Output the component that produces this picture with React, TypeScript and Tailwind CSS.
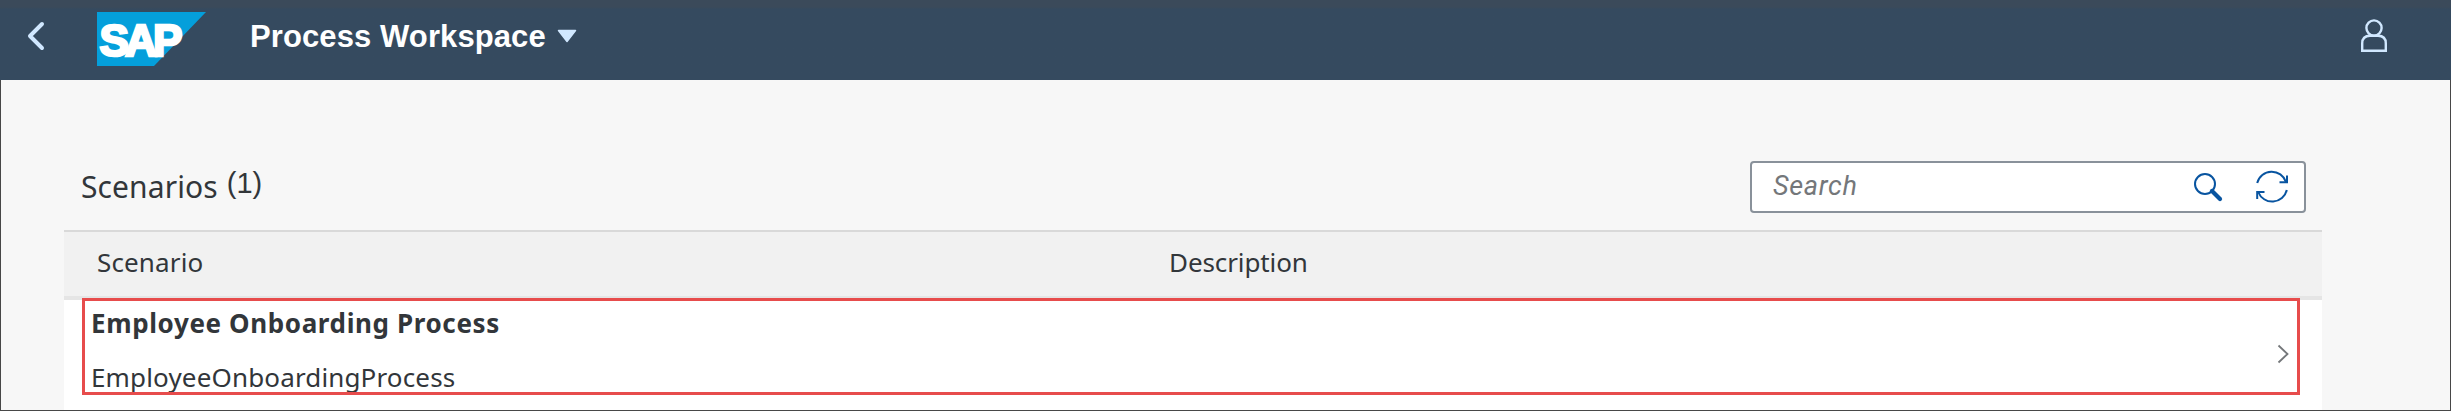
import React from "react";

function ShellBar() {
  return (
    <header className="flex h-20 shrink-0 items-start bg-[#354a5f] bg-linear-to-b from-[#3b4a5a] from-[7px] to-[#354a5f] to-[9px] pr-16">
      <button aria-label="Back" className="ml-[26px] mt-5 h-8 w-5">
        <svg width="20" height="32" viewBox="0 0 20 32" fill="none" stroke="#d1e8ff" strokeWidth="4" strokeLinecap="round" strokeLinejoin="round">
          <path d="M16 4L4 16L16 28" />
        </svg>
      </button>
      <svg className="ml-[51px] mt-3" width="109" height="54" viewBox="0 0 109 54">
        <path d="M0 0H109L57 54H0Z" fill="#049fdb" />
        <text x="2.5" y="43.5" textLength="79" lengthAdjust="spacingAndGlyphs" fill="#fff" stroke="#fff" strokeWidth="2.6" fontFamily="Liberation Sans, sans-serif" fontWeight="700" fontSize="45" letterSpacing="-4">
          SAP
        </text>
      </svg>
      <button className="ml-[44px] mt-[17px] flex h-10 items-center font-['Liberation_Sans',sans-serif] text-[31px] font-bold leading-10 tracking-[0.1px] text-white">
        Process Workspace
        <svg className="-mt-[2px] ml-[11px]" width="20" height="14" viewBox="0 0 20 14">
          <path d="M1.5 1.5H18.5L10 12.5Z" fill="#d1e8ff" stroke="#d1e8ff" strokeWidth="1.5" strokeLinejoin="round" />
        </svg>
      </button>
      <svg className="ml-auto mt-[19px]" width="26" height="34" viewBox="0 0 26 34" fill="none" stroke="#d1e8ff" strokeWidth="2.4">
        <circle cx="13" cy="9" r="7.6" />
        <path d="M1.2 31.8V24.5Q1.2 16.8 9 16.8H17Q24.8 16.8 24.8 24.5V31.8Z" />
      </svg>
    </header>
  );
}

function SearchField() {
  return (
    <div className="mt-[81px] flex h-[52px] w-[556px] items-center rounded-[4px] border-2 border-[#89919a] bg-white pl-[21px]">
      <span className="-mt-0.5 font-[Roboto,sans-serif] text-[27px] italic leading-8 tracking-[0.7px] text-[#74777a]">Search</span>
      <svg className="ml-auto" width="30" height="30" viewBox="0 0 30 30" fill="none" stroke="#0854a0">
        <circle cx="12" cy="12" r="10" strokeWidth="2" />
        <path d="M19 19L27 27" strokeWidth="4.2" strokeLinecap="round" />
      </svg>
      <svg className="ml-8 mr-[15px]" width="34" height="34" viewBox="0 0 34 34" fill="none" stroke="#0854a0" strokeWidth="2">
        <path d="M2.2 13A15 15 0 0 1 31 12" />
        <path d="M31.8 20A15 15 0 0 1 3.2 22" />
        <path d="M32 5.5V12.3H24.5" />
        <path d="M2.2 29V22H9.5" />
      </svg>
    </div>
  );
}

export default function App() {
  return (
    <div className="flex h-[411px] w-[2451px] flex-col overflow-hidden bg-[#f7f7f7] font-['Noto_Sans',sans-serif] text-[#32363a]">
      <ShellBar />
      <main className="flex flex-1 flex-col border-x border-b border-[#474747] pl-[63px] pr-32">
        <div className="flex h-[150px] items-start justify-between pl-4 pr-4">
          <div className="flex items-start">
            <h1 className="ml-px mt-[87px] text-[30px] leading-10 tracking-[0.1px]">Scenarios</h1>
            <span className="ml-[9px] mt-[83px] font-['Liberation_Sans',sans-serif] text-[29px] leading-10">(1)</span>
          </div>
          <SearchField />
        </div>
        <div className="flex h-[70px] shrink-0 border-b-4 border-t-2 border-b-[#e5e5e5] border-t-[#d9d9d9] bg-[#f1f1f1] text-[26px] leading-8">
          <div className="w-[1073px] pl-[33px] pt-[14px] tracking-[0.15px]">Scenario</div>
          <div className="pl-8 pt-[14px] tracking-[-0.1px]">Description</div>
        </div>
        <div className="flex-1 bg-white pl-[18px] pr-[22px]">
          <div className="relative -mt-0.5 flex h-[97px] justify-between border-[3px] border-[#e74c4c] pl-[6px] pr-[8px]">
            <div className="h-[91px] overflow-hidden text-[26px] leading-8">
              <div className="pt-[6px] font-bold tracking-[0.62px]">Employee Onboarding Process</div>
              <div className="mt-[22px] tracking-[0.15px]">EmployeeOnboardingProcess</div>
            </div>
            <svg className="mt-[43px]" width="12" height="20" viewBox="0 0 12 20" fill="none" stroke="#74777a" strokeWidth="1.8">
              <path d="M1.5 1.5L10.5 10L1.5 18.5" />
            </svg>
          </div>
        </div>
      </main>
    </div>
  );
}
